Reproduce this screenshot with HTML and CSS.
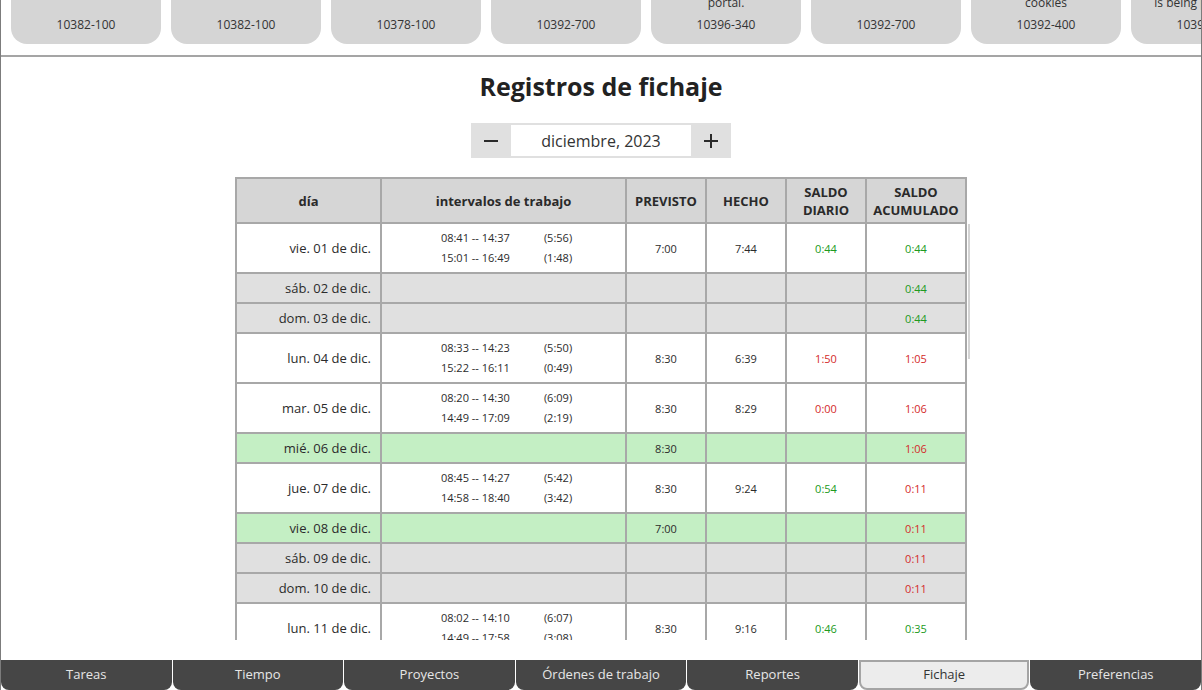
FILE: index.html
```html
<!DOCTYPE html>
<html lang="es">
<head>
<meta charset="utf-8">
<title>Registros de fichaje</title>
<link rel="stylesheet" href="styles.css">
</head>
<body>
<div class="app">
  <div class="cards">
    <div class="card"><span class="far">Revisión de la página principal</span><span>10382-100</span></div>
    <div class="card"><span class="far">Corrección de enlaces rotos</span><span>10382-100</span></div>
    <div class="card"><span class="far">Actualizar textos legales</span><span>10378-100</span></div>
    <div class="card"><span class="far">Ajustes de diseño móvil</span><span>10392-700</span></div>
    <div class="card"><span>Migración de contenidos al nuevo<br>portal.</span><span>10396-340</span></div>
    <div class="card"><span class="far">Revisión de formularios</span><span>10392-700</span></div>
    <div class="card"><span>Aviso de consentimiento de<br>cookies</span><span>10392-400</span></div>
    <div class="card"><span>Check why the newsletter<br>is being processed</span><span>10392-500</span></div>
  </div>
  <div class="main">
    <h1 class="title">Registros de fichaje</h1>
    <div class="picker">
      <button class="pick-btn" aria-label="anterior"><svg width="16" height="16" viewBox="0 0 16 16"><path d="M1 8h14" stroke="#2a2a2a" stroke-width="2"/></svg></button>
      <div class="pick-label">diciembre, 2023</div>
      <button class="pick-btn" aria-label="siguiente"><svg width="16" height="16" viewBox="0 0 16 16"><path d="M1 8h14M8 1v14" stroke="#2a2a2a" stroke-width="2"/></svg></button>
    </div>
    <div class="table-wrap">
      <table class="log">
        <colgroup>
          <col class="c-day"><col class="c-int"><col class="c-num"><col class="c-num"><col class="c-num"><col class="c-acc">
        </colgroup>
        <thead>
          <tr><th>día</th><th>intervalos de trabajo</th><th>PREVISTO</th><th>HECHO</th><th>SALDO<br>DIARIO</th><th>SALDO<br>ACUMULADO</th></tr>
        </thead>
        <tbody>
          <tr class="tall"><td class="day">vie. 01 de dic.</td><td><div class="ints"><span>08:41 -- 14:37</span><span>(5:56)</span><span>15:01 -- 16:49</span><span>(1:48)</span></div></td><td>7:00</td><td>7:44</td><td class="pos">0:44</td><td class="pos">0:44</td></tr>
          <tr class="short off"><td class="day">sáb. 02 de dic.</td><td></td><td></td><td></td><td></td><td class="pos">0:44</td></tr>
          <tr class="short off"><td class="day">dom. 03 de dic.</td><td></td><td></td><td></td><td></td><td class="pos">0:44</td></tr>
          <tr class="tall"><td class="day">lun. 04 de dic.</td><td><div class="ints"><span>08:33 -- 14:23</span><span>(5:50)</span><span>15:22 -- 16:11</span><span>(0:49)</span></div></td><td>8:30</td><td>6:39</td><td class="neg">1:50</td><td class="neg">1:05</td></tr>
          <tr class="tall"><td class="day">mar. 05 de dic.</td><td><div class="ints"><span>08:20 -- 14:30</span><span>(6:09)</span><span>14:49 -- 17:09</span><span>(2:19)</span></div></td><td>8:30</td><td>8:29</td><td class="neg">0:00</td><td class="neg">1:06</td></tr>
          <tr class="short hol"><td class="day">mié. 06 de dic.</td><td></td><td>8:30</td><td></td><td></td><td class="neg">1:06</td></tr>
          <tr class="tall"><td class="day">jue. 07 de dic.</td><td><div class="ints"><span>08:45 -- 14:27</span><span>(5:42)</span><span>14:58 -- 18:40</span><span>(3:42)</span></div></td><td>8:30</td><td>9:24</td><td class="pos">0:54</td><td class="neg">0:11</td></tr>
          <tr class="short hol"><td class="day">vie. 08 de dic.</td><td></td><td>7:00</td><td></td><td></td><td class="neg">0:11</td></tr>
          <tr class="short off"><td class="day">sáb. 09 de dic.</td><td></td><td></td><td></td><td></td><td class="neg">0:11</td></tr>
          <tr class="short off"><td class="day">dom. 10 de dic.</td><td></td><td></td><td></td><td></td><td class="neg">0:11</td></tr>
          <tr class="tall"><td class="day">lun. 11 de dic.</td><td><div class="ints"><span>08:02 -- 14:10</span><span>(6:07)</span><span>14:49 -- 17:58</span><span>(3:08)</span></div></td><td>8:30</td><td>9:16</td><td class="pos">0:46</td><td class="pos">0:35</td></tr>
        </tbody>
      </table>
      <div class="thumb"></div>
    </div>
  </div>
  <nav class="tabs">
    <a class="tab">Tareas</a>
    <a class="tab">Tiempo</a>
    <a class="tab">Proyectos</a>
    <a class="tab">Órdenes de trabajo</a>
    <a class="tab">Reportes</a>
    <a class="tab active">Fichaje</a>
    <a class="tab">Preferencias</a>
  </nav>
</div>
</body>
</html>
```
FILE: styles.css
```css
* { box-sizing: border-box; }
html, body { margin: 0; padding: 0; background: #fff; }
body {
  width: 1202px;
  height: 690px;
  overflow: hidden;
  font-family: "Open Sans", "Noto Sans", sans-serif;
  color: #2b2b2b;
}
.app {
  height: 690px;
  display: flex;
  flex-direction: column;
  border-left: 1px solid #7c7c7c;
  border-right: 1px solid #7c7c7c;
}
.cards {
  height: 57px;
  flex: none;
  display: flex;
  align-items: flex-end;
  gap: 10px;
  padding: 0 0 11px 10px;
  overflow: hidden;
  border-bottom: 2px solid #a5a5a5;
}
.card {
  flex: none;
  width: 150px;
  background: #d5d5d5;
  border-radius: 0 0 16px 16px;
  display: flex;
  flex-direction: column;
  align-items: center;
  text-align: center;
  font-size: 12px;
  line-height: 22px;
  color: #333;
  padding: 0 4px 8px;
  white-space: nowrap;
}
.card .far { margin-bottom: 22px; }
.main {
  flex: 1;
  min-height: 0;
  display: flex;
  flex-direction: column;
  align-items: center;
  padding-bottom: 20px;
}
.title {
  margin: 12px 0 0;
  font-size: 25px;
  line-height: 34px;
  font-weight: 700;
  color: #222;
}
.picker {
  margin-top: 20px;
  display: flex;
  height: 35px;
}
.pick-btn {
  width: 40px;
  height: 35px;
  border: none;
  background: #e0e0e0;
  padding: 0;
  display: flex;
  align-items: center;
  justify-content: center;
}
.pick-label {
  width: 180px;
  border-top: 2px solid #e0e0e0;
  border-bottom: 2px solid #e0e0e0;
  display: flex;
  align-items: center;
  justify-content: center;
  font-size: 16px;
  color: #333;
}
.table-wrap {
  margin-top: 19px;
  flex: 1;
  min-height: 0;
  overflow: hidden;
  position: relative;
  width: 740px;
  padding-right: 8px;
  margin-left: 8px;
}
.log {
  border-collapse: collapse;
  table-layout: fixed;
  width: 732px;
  border: 2px solid #a8a8a8;
}
.c-day { width: 145px; }
.c-int { width: 245px; }
.c-num { width: 80px; }
.c-acc { width: 100px; }
.log th, .log td {
  border: 2px solid #a8a8a8;
  padding: 0;
  text-align: center;
  vertical-align: middle;
}
.log th {
  background: #d6d6d6;
  height: 45px;
  font-size: 13px;
  line-height: 18px;
  font-weight: 700;
  color: #2a2a2a;
}
.log td {
  font-size: 11px;
  color: #2b2b2b;
}
.log td.day {
  text-align: right;
  padding-right: 9px;
  font-size: 13px;
}
.log tr.tall td { height: 50px; background: #fff; }
.log tr.short td { height: 30px; }
.log tr.off td { background: #e0e0e0; }
.log tr.hol td { background: #c4efc4; }
.log td.pos { color: #209a20; }
.log td.neg { color: #d42a2a; }
.ints {
  display: grid;
  grid-template-columns: 103px auto;
  justify-content: center;
  text-align: left;
  line-height: 20px;
  padding-left: 6px;
}
.thumb {
  position: absolute;
  left: 733px;
  top: 47px;
  width: 2px;
  height: 135px;
  background: #d4d4d4;
}
.tabs {
  height: 30px;
  flex: none;
  display: flex;
  gap: 1px;
  background: #fff;
}
.tab {
  flex: 1 1 0;
  min-width: 0;
  background: #464646;
  color: #e6e6e6;
  font-size: 13px;
  display: flex;
  align-items: center;
  justify-content: center;
  border: 2px solid transparent;
  border-radius: 0 0 8px 8px;
  padding-bottom: 2px;
}
.tab.active {
  background: #ececec;
  color: #333;
  border-color: #a4a4a4;
}
```
